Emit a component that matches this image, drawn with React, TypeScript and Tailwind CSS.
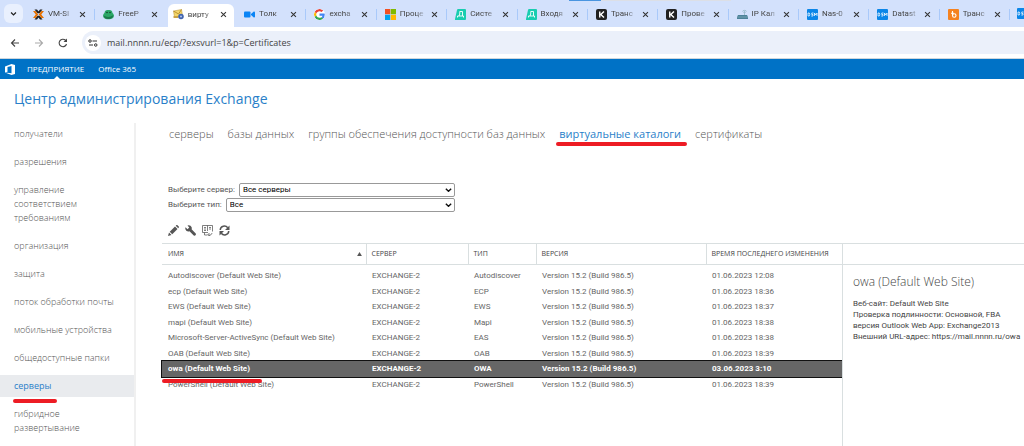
import React from "react";

const iconBox = "w-[11px] h-[11px] shrink-0";

const ProxmoxIcon = () => (
  <svg viewBox="0 0 22 22" className={iconBox}>
    <path d="M3 1h5l3 4 3-4h5l-6 7.5H9z" fill="#222" />
    <path d="M3 21h5l3-4 3 4h5l-6-7.5H9z" fill="#222" />
    <path d="M0 4h5l5.500 7-5.500 7H0l5.500-7zM22 4h-5l-5.500 7 5.500 7h5l-5.500-7z" fill="#e57000" />
  </svg>
);

const FrogIcon = () => (
  <svg viewBox="0 0 22 22" className={iconBox}>
    <path d="M3 8c0-5 4-7 8-6 4-1 8 1 8 6 3 2 4 7 1 10-4 3-14 4-18 0-3-3-2-8 1-10z" fill="#2ba866" />
    <path d="M1 13c6 4 14 4 20-1-1 5-5 8-10 8S2 18 1 13z" fill="#1b7a4b" />
    <circle cx="8" cy="7" r="1.600" fill="#123f2a" />
    <circle cx="14" cy="7" r="1.600" fill="#123f2a" />
  </svg>
);

const ExchangeIcon = () => (
  <svg viewBox="0 0 22 22" className={iconBox}>
    <path d="M1 4l16-3 2 12-16 3z" fill="#f5d76a" stroke="#b78d2c" />
    <path d="M1 4l10 6 6-9" fill="none" stroke="#a87f25" strokeWidth="1.500" />
    <path d="M1 14h10v4H1z" fill="#caa244" />
    <circle cx="16" cy="15" r="5.500" fill="#4063ad" />
    <circle cx="16" cy="15" r="2" fill="#b8c9ef" />
  </svg>
);

const TalkIcon = () => (
  <svg viewBox="0 0 22 22" className={iconBox}>
    <rect x="0" y="5" width="13" height="12" rx="2" fill="#0a84f5" />
    <path d="M14 10l5-4.500c1.500-1 3 0 3 1v9c0 1-1.500 2-3 1l-5-4.500z" fill="#0a84f5" />
  </svg>
);

const GoogleIcon = () => (
  <svg viewBox="0 0 48 48" className="w-[11px] h-[11px] shrink-0 rounded-full bg-white">
    <path fill="#EA4335" d="M24 9.500c3.540 0 6.710 1.220 9.210 3.600l6.850-6.850C35.900 2.380 30.470 0 24 0 14.620 0 6.510 5.380 2.560 13.220l7.980 6.190C12.430 13.720 17.740 9.500 24 9.500z" />
    <path fill="#4285F4" d="M46.980 24.550c0-1.570-.15-3.090-.38-4.550H24v9.020h12.940c-.58 2.960-2.260 5.480-4.780 7.180l7.730 6c4.510-4.180 7.090-10.360 7.090-17.650z" />
    <path fill="#FBBC05" d="M10.530 28.590A14.500 14.500 0 0 1 9.770 24c0-1.600.27-3.140.76-4.590l-7.980-6.190A23.900 23.900 0 0 0 0 24c0 3.880.92 7.540 2.560 10.780z" />
    <path fill="#34A853" d="M24 48c6.480 0 11.930-2.130 15.890-5.810l-7.730-6c-2.150 1.450-4.920 2.300-8.160 2.300-6.260 0-11.570-4.220-13.470-9.910l-7.980 6.190C6.510 42.620 14.620 48 24 48z" />
  </svg>
);

const MicrosoftIcon = () => (
  <svg viewBox="0 0 22 22" className={iconBox}>
    <path d="M0 0h10.500v10.500H0z" fill="#f25022" />
    <path d="M11.500 0H22v10.500H11.500z" fill="#7fba00" />
    <path d="M0 11.500h10.500V22H0z" fill="#00a4ef" />
    <path d="M11.500 11.500H22V22H11.500z" fill="#ffb900" />
  </svg>
);

const DirectumIcon = () => (
  <svg viewBox="0 0 22 22" className={iconBox}>
    <path d="M6 0h14q2 0 2 2v18q0 2-2 2H1q-1.500 0-1-2L4 2q.5-2 2-2z" fill="#19cdb0" />
    <path d="M5 17v-3h12v3M8 14c1.500-3 1.500-5 1.500-9H15v9" fill="none" stroke="#fff" strokeWidth="1.800" />
  </svg>
);

const KonturIcon = () => (
  <svg viewBox="0 0 22 22" className={iconBox}>
    <rect width="22" height="22" rx="4" fill="#222" />
    <path d="M7.500 5v12M16 5l-6.500 6 6.500 6" fill="none" stroke="#fff" strokeWidth="2.800" />
  </svg>
);

const RouterIcon = () => (
  <svg viewBox="0 0 22 22" className={iconBox}>
    <path d="M15 13V5M11 5c0-3 8-3 8 0M13 7c0-2 4-2 4 0" fill="none" stroke="#8fb3c2" strokeWidth="1.500" />
    <path d="M2 12h18l2 4v4H0v-4z" fill="#4c8299" />
    <path d="M0 16h22" stroke="#9fc1cf" />
  </svg>
);

const DsmIcon = () => (
  <svg viewBox="0 0 22 22" className={iconBox}>
    <rect width="22" height="22" rx="2" fill="#0b86e8" />
    <path d="M2 8v6h2.500q2-3 0-6zM13 8H9.500v3H12v3H8.500M15 14V8l2.500 4L20 8v6" fill="none" stroke="#fff" strokeWidth="1.500" />
  </svg>
);

const OrangeIcon = () => (
  <svg viewBox="0 0 22 22" className={iconBox}>
    <rect width="22" height="22" rx="2" fill="#f58220" />
    <path d="M9 4v9M6 8.500h6" stroke="#fff" strokeWidth="2.200" />
    <circle cx="12.500" cy="13" r="3.500" fill="none" stroke="#fff" strokeWidth="2.200" />
  </svg>
);

const browserTabs = [
  { title: "VM-SI", icon: <ProxmoxIcon /> },
  { title: "FreeP", icon: <FrogIcon /> },
  { title: "вирту", icon: <ExchangeIcon />, active: true },
  { title: "Толк", icon: <TalkIcon /> },
  { title: "excha", icon: <GoogleIcon /> },
  { title: "Проце", icon: <MicrosoftIcon /> },
  { title: "Систе", icon: <DirectumIcon /> },
  { title: "Входя", icon: <DirectumIcon /> },
  { title: "Транс", icon: <KonturIcon /> },
  { title: "Прове", icon: <KonturIcon /> },
  { title: "IP Кал", icon: <RouterIcon /> },
  { title: "Nas-0", icon: <DsmIcon /> },
  { title: "Datast", icon: <DsmIcon /> },
  { title: "Транс", icon: <OrangeIcon /> },
];

const navItems = [
  "получатели",
  "разрешения",
  "управление соответствием требованиям",
  "организация",
  "защита",
  "поток обработки почты",
  "мобильные устройства",
  "общедоступные папки",
  "серверы",
  "гибридное развертывание",
];

const sections = [
  "серверы",
  "базы данных",
  "группы обеспечения доступности баз данных",
  "виртуальные каталоги",
  "сертификаты",
];

const rows = [
  { name: "Autodiscover (Default Web Site)", type: "Autodiscover", date: "01.06.2023 12:08" },
  { name: "ecp (Default Web Site)", type: "ECP", date: "01.06.2023 18:36" },
  { name: "EWS (Default Web Site)", type: "EWS", date: "01.06.2023 18:37" },
  { name: "mapi (Default Web Site)", type: "Mapi", date: "01.06.2023 18:38" },
  { name: "Microsoft-Server-ActiveSync (Default Web Site)", type: "EAS", date: "01.06.2023 18:38" },
  { name: "OAB (Default Web Site)", type: "OAB", date: "01.06.2023 18:39" },
  { name: "owa (Default Web Site)", type: "OWA", date: "03.06.2023 3:10", selected: true },
  { name: "PowerShell (Default Web Site)", type: "PowerShell", date: "01.06.2023 18:39" },
];

function BrowserChrome() {
  return (
    <header>
      <div className="relative flex h-[27px] bg-[#d3e1fc]">
        <div className="absolute top-0 left-[569px] flex">
          <span className="w-8 h-px bg-[#4a95e0]" />
          <span className="w-[130px] h-px bg-[#dcdfe6]" />
        </div>
        <div className="w-[25px] shrink-0 pt-1 pl-1">
          <button
            type="button"
            aria-label="Поиск вкладок"
            className="flex items-center justify-center w-[19px] h-[19px] rounded-md bg-[#e9f0fe]"
          >
            <svg viewBox="0 0 10 10" className="w-[7px] h-[7px]">
              <path d="M1.500 3.500L5 7l3.500-3.500" fill="none" stroke="#222" strokeWidth="1.800" />
            </svg>
          </button>
        </div>
        {browserTabs.map((tab, i) => (
          <div
            key={i}
            className={
              tab.active
                ? "flex flex-1 min-w-0 items-center mt-1 mx-[2px] pl-[5px] pr-[7px] pb-[2px] bg-white rounded-t-md"
                : "flex flex-1 min-w-0 items-center px-2 pt-px"
            }
          >
            {tab.icon}
            <span className="flex-1 min-w-0 ml-1 overflow-hidden whitespace-nowrap font-['Roboto','Noto_Sans',sans-serif] text-[8px] leading-3 text-[#444] [mask-image:linear-gradient(to_right,black_50%,transparent_85%)]">
              {tab.title}
            </span>
            <button type="button" aria-label="Закрыть вкладку" className="shrink-0">
              <svg viewBox="0 0 10 10" className="w-[7px] h-[7px]">
                <path d="M1.500 1.500l7 7M8.500 1.500l-7 7" stroke="#333" strokeWidth="1.500" />
              </svg>
            </button>
            {!tab.active && i !== 1 && <span className="w-px h-[11px] ml-2 -mr-2 shrink-0 bg-[#a9c9fa]" />}
          </div>
        ))}
        <div className="flex items-center w-[14px] shrink-0 overflow-hidden pl-[7px]">
          <DsmIcon />
        </div>
      </div>

      <div className="flex items-center h-8 bg-white border-b border-[#cdd6dd]">
        <div className="flex items-center w-[82px] shrink-0 pl-[10px] gap-[14px]">
          <button type="button" aria-label="Назад">
            <svg viewBox="0 0 20 20" className="w-[10px] h-[10px]">
              <path d="M18 10H3M10 3l-7 7 7 7" fill="none" stroke="#444" strokeWidth="2.200" />
            </svg>
          </button>
          <button type="button" aria-label="Вперед">
            <svg viewBox="0 0 20 20" className="w-[10px] h-[10px]">
              <path d="M2 10h15M10 3l7 7-7 7" fill="none" stroke="#aaa" strokeWidth="2.200" />
            </svg>
          </button>
          <button type="button" aria-label="Обновить">
            <svg viewBox="0 0 20 20" className="w-[10px] h-[10px]">
              <path d="M17 12a7.500 7.500 0 1 1-2-7.500l2 2" fill="none" stroke="#444" strokeWidth="2.200" />
              <path d="M18 1v7h-7z" fill="#444" />
            </svg>
          </button>
        </div>
        <div className="flex items-center flex-1 h-[23px] pl-[3px] rounded-l-full bg-[#ebf0fa]">
          <span className="flex items-center justify-center w-4 h-4 mr-[6px] bg-white rounded-full">
            <svg viewBox="0 0 20 16" className="w-[10px] h-2">
              <g fill="none" stroke="#333" strokeWidth="2">
                <circle cx="4" cy="4" r="2.500" />
                <path d="M9 4h9M2 12h8" />
                <circle cx="15.500" cy="12" r="2.500" />
              </g>
            </svg>
          </span>
          <input
            aria-label="Адресная строка"
            defaultValue="mail.nnnn.ru/ecp/?exsvurl=1&p=Certificates"
            className="flex-1 min-w-0 bg-transparent text-[9px] leading-4 text-[#444] outline-none"
          />
        </div>
      </div>
    </header>
  );
}

function SuiteBar() {
  return (
    <div className="flex items-center h-5 pl-[5px] bg-[#0072c6] text-[8px] text-white">
      <svg viewBox="0 0 20 22" className="w-[10px] h-[11px] mr-3">
        <path d="M0 5L13 0l7 2v18l-7 2L0 17l13 1.500V4L5 6v9.500L0 17z" fill="#fff" />
      </svg>
      <a href="#enterprise" className="relative flex items-center h-5 mr-[14px]">
        ПРЕДПРИЯТИЕ
        <svg viewBox="0 0 6 3" className="absolute bottom-0 left-1/2 -ml-[2px] w-[6px] h-[3px]">
          <path d="M0 3l3-3 3 3z" fill="#fff" />
        </svg>
      </a>
      <a href="#office365">Office 365</a>
    </div>
  );
}

function SideNav() {
  return (
    <nav className="flex flex-col w-[136px] shrink-0 gap-[6px] border-r-2 border-[#f0f0f0]">
      {navItems.map((item) => {
        const active = item === "серверы";
        return (
          <a
            key={item}
            href="#nav"
            className={
              active
                ? "relative py-1 pl-[14px] pr-3 text-[9px] leading-[14px] text-[#2a7fc9] bg-[#e9ebee]"
                : "py-1 pl-[14px] pr-3 text-[9px] leading-[14px] font-light text-[#555]"
            }
          >
            {item}
            {active && <span className="absolute left-[13px] top-6 w-11 h-1 rounded-full bg-[#ed1c24]" />}
          </a>
        );
      })}
    </nav>
  );
}

function Filter({ id, label, value }: { id: string; label: string; value: string }) {
  return (
    <div className="flex items-center">
      <label htmlFor={id} className="mr-1 whitespace-nowrap">
        {label}
      </label>
      <div className="relative flex flex-1">
        <select
          id={id}
          className="w-full h-[14px] pl-[3px] appearance-none border border-[#999] rounded-[2px] bg-white text-[8px] leading-3 text-black"
        >
          <option>{value}</option>
        </select>
        <svg viewBox="0 0 10 6" className="absolute right-[3px] top-[5px] w-[7px] h-1 pointer-events-none">
          <path d="M1 1l4 4 4-4" fill="none" stroke="#111" strokeWidth="2" />
        </svg>
      </div>
    </div>
  );
}

function Toolbar() {
  return (
    <div className="flex items-center gap-[6px] h-3 pl-[6px] text-[#555]">
      <button type="button" aria-label="Изменить">
        <svg viewBox="0 0 22 22" className="w-[11px] h-[11px]" fill="currentColor">
          <path d="M0 22l2-7 5 5zM3.500 13.500L14 3l5 5L8.500 18.500zM15.500 1.500L17 0q1-.500 2 .500L21.500 3q1 1 0 2L20.500 6.500z" />
        </svg>
      </button>
      <button type="button" aria-label="Настроить">
        <svg viewBox="0 0 22 22" className="w-[11px] h-[11px]" fill="currentColor">
          <path d="M5 1q6-1.500 8 3 1 2 .2 4.500L21.500 17q1 2-.500 3.500t-3.500.5L9 12.500Q3 14 1 9q-.8-2 0-4.500L5 8.500 8.500 5z" />
        </svg>
      </button>
      <button type="button" aria-label="Сбросить виртуальный каталог">
        <svg viewBox="0 0 22 22" className="w-[11px] h-[11px]" fill="none" stroke="currentColor" strokeWidth="1.500">
          <path d="M12 15H1V1h20v12M11 1v11M4 5h4M4 8h4M4 11h4M14 5h4M14 8h4" />
          <path d="M5 15v5h5M13 20c5 1 6-1 7-4M11 20l4-4M11 20l5 1" />
        </svg>
      </button>
      <button type="button" aria-label="Обновить список">
        <svg viewBox="0 0 22 22" className="w-[11px] h-[11px]" fill="none" stroke="currentColor" strokeWidth="3">
          <path d="M2.500 10C3 1.500 13 0 17.500 5.500M19.500 12C19 20.500 9 22 4.500 16.500" />
          <path d="M21 1v9h-9zM1 21v-9h9z" fill="currentColor" stroke="none" />
        </svg>
      </button>
    </div>
  );
}

const thClass =
  "border-l border-[#d9dfe0] pl-[5px] font-normal text-left text-[7px] font-['Open_Sans','Noto_Sans',sans-serif] whitespace-nowrap";

function DirectoryTable() {
  return (
    <table className="w-full table-fixed border-collapse text-[8px] leading-3">
      <colgroup>
        <col className="w-[30%]" />
        <col className="w-[15%]" />
        <col className="w-[10%]" />
        <col className="w-[25%]" />
        <col className="w-[20%]" />
      </colgroup>
      <thead>
        <tr className="h-[21px] border-y border-[#d9dfe0] text-[#444]">
          <th className="pl-[6px] pr-1 font-normal text-left text-[7px] font-['Open_Sans','Noto_Sans',sans-serif]">
            <div className="flex items-center justify-between">
              ИМЯ
              <svg viewBox="0 0 6 5" className="w-[5px] h-1">
                <path d="M0 5l3-5 3 5z" fill="#555" />
              </svg>
            </div>
          </th>
          <th className={thClass}>СЕРВЕР</th>
          <th className={thClass}>ТИП</th>
          <th className={thClass}>ВЕРСИЯ</th>
          <th className={thClass}>ВРЕМЯ ПОСЛЕДНЕГО ИЗМЕНЕНИЯ</th>
        </tr>
      </thead>
      <tbody className="before:block before:h-[3px] text-[#666]">
        {rows.map((row) => (
          <tr
            key={row.name}
            className={
              row.selected
                ? "h-4 bg-[#666] text-white font-bold outline outline-[#111]"
                : "odd:h-4 even:h-[15px]"
            }
          >
            <td className="relative pl-[6px] whitespace-nowrap">
              {row.name}
              {row.selected && (
                <span className="absolute left-0 top-[18px] z-10 w-[100px] h-1 rounded-full bg-[#ed1c24]" />
              )}
            </td>
            <td className="pl-[6px]">EXCHANGE-2</td>
            <td className="pl-[6px]">{row.type}</td>
            <td className="pl-[6px] whitespace-nowrap">Version 15.2 (Build 986.5)</td>
            <td className="pl-[6px] whitespace-nowrap">{row.date}</td>
          </tr>
        ))}
      </tbody>
    </table>
  );
}

function Details() {
  return (
    <aside className="w-[182px] shrink-0 border-t border-l border-[#d9dfe0] text-[8px] leading-[11px] text-[#444]">
      <div className="h-[21px] border-b border-[#d9dfe0]" />
      <div className="pl-[10px] pt-2 whitespace-nowrap">
        <h2 className="mb-[7px] text-[12px] leading-[18px] font-light font-['Open_Sans','Noto_Sans',sans-serif]">
          owa (Default Web Site)
        </h2>
        <p>Веб-сайт: Default Web Site</p>
        <p>Проверка подлинности: Основной, FBA</p>
        <p>версия Outlook Web App: Exchange2013</p>
        <p>Внешний URL-адрес: https://mail.nnnn.ru/owa</p>
      </div>
    </aside>
  );
}

export default function App() {
  return (
    <div className="flex flex-col min-h-screen overflow-hidden bg-white font-['Open_Sans','Noto_Sans',sans-serif]">
      <BrowserChrome />
      <SuiteBar />
      <h1 className="h-11 pl-[14px] pt-[10px] text-[14px] leading-5 text-[#2a7fc9]">
        Центр администрирования Exchange
      </h1>
      <div className="flex flex-1">
        <SideNav />
        <main className="flex flex-col flex-1 min-w-0 pl-[26px]">
          <div className="flex gap-[14px] h-[60px] pl-[7px] text-[11px] leading-[22px] font-light text-[#555] whitespace-nowrap">
            {sections.map((section) =>
              section === "виртуальные каталоги" ? (
                <a key={section} href="#section" className="relative h-6 font-normal text-[#2a7fc9]">
                  {section}
                  <span className="absolute -left-[3px] -right-[6px] top-[19px] h-1 rounded-full bg-[#ed1c24]" />
                </a>
              ) : (
                <a key={section} href="#section">
                  {section}
                </a>
              )
            )}
          </div>
          <div className="flex flex-col gap-px w-[293px] pl-[6px] mb-3 font-['Roboto','Noto_Sans',sans-serif] text-[8px] text-[#555]">
            <Filter id="server" label="Выберите сервер:" value="Все серверы" />
            <Filter id="type" label="Выберите тип:" value="Все" />
          </div>
          <Toolbar />
          <div className="flex flex-1 mt-[7px] font-['Roboto','Noto_Sans',sans-serif]">
            <div className="flex-1 min-w-0">
              <DirectoryTable />
            </div>
            <Details />
          </div>
        </main>
      </div>
    </div>
  );
}
